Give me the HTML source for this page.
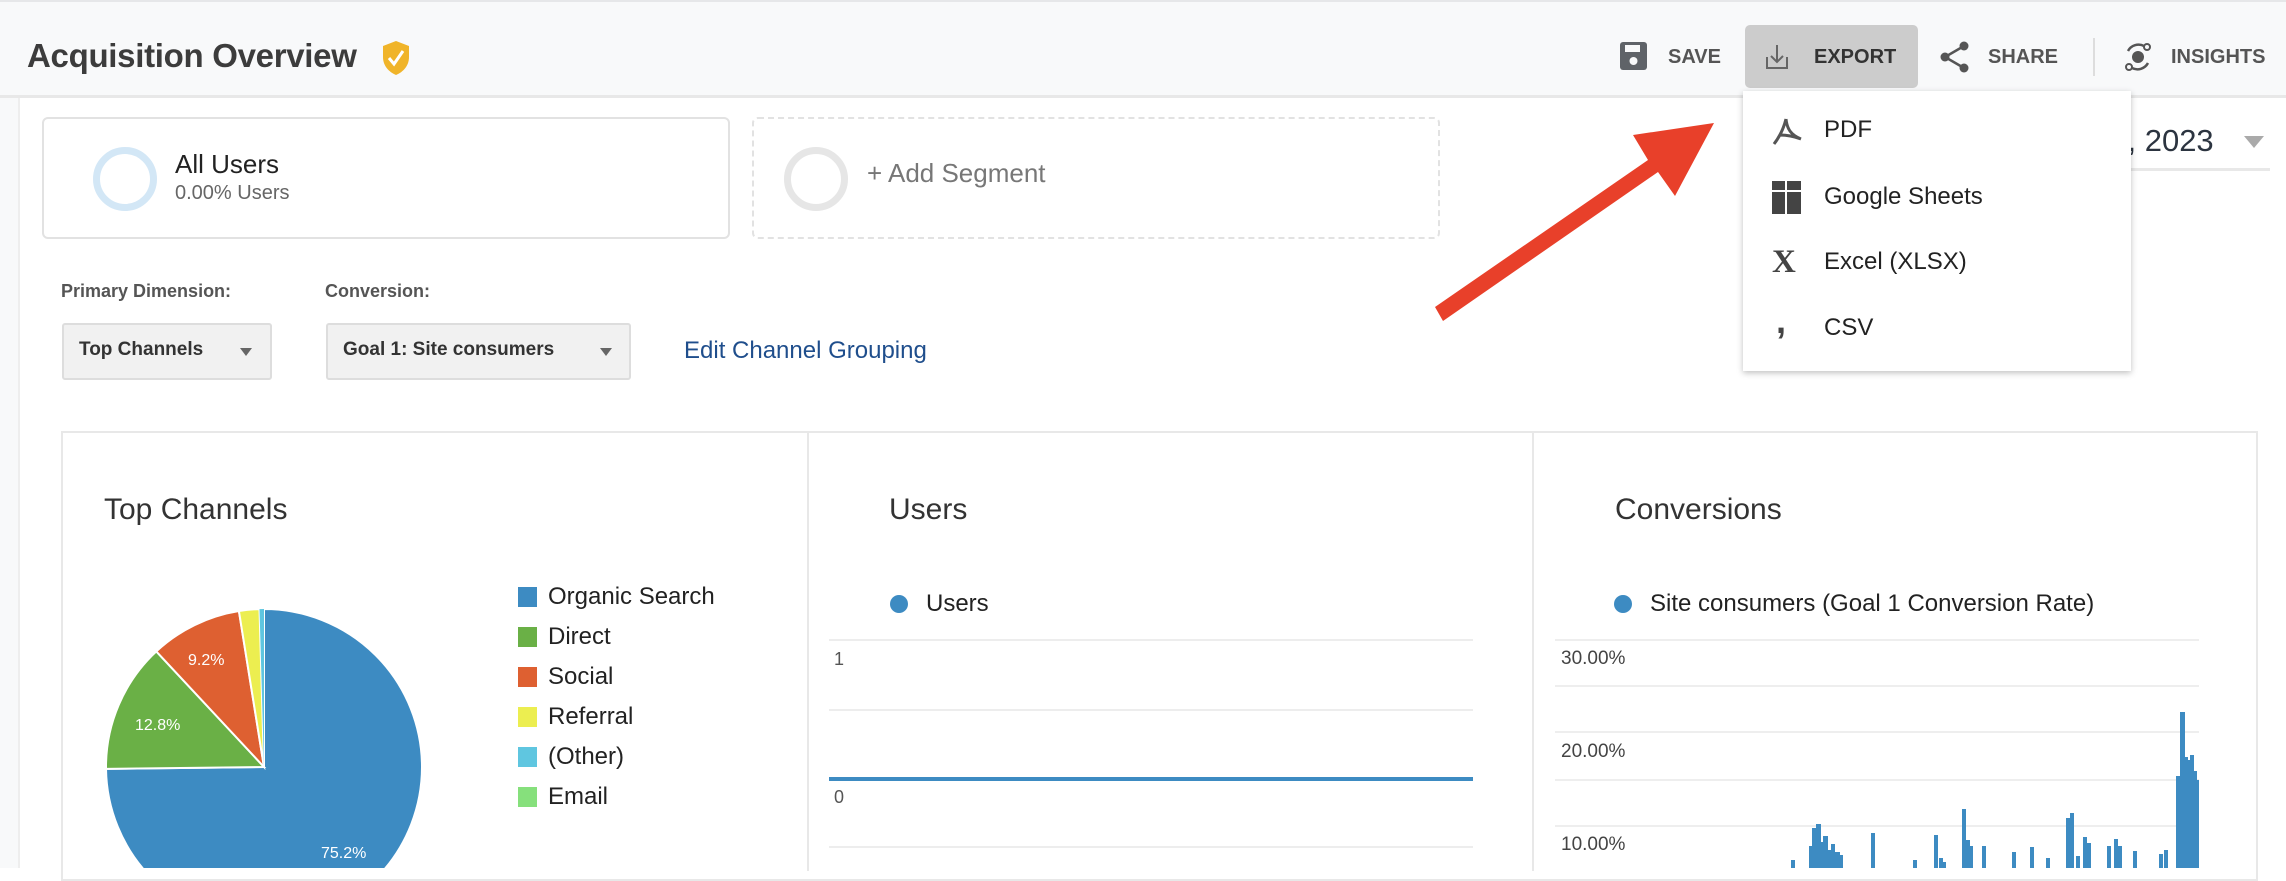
<!DOCTYPE html>
<html><head><meta charset="utf-8"><style>
*{margin:0;padding:0;box-sizing:border-box}
body{width:2286px;height:868px;overflow:hidden;background:#fff;font-family:"Liberation Sans",Arial,sans-serif;position:relative;color:#333}
.a{position:absolute;white-space:nowrap}
.lg{position:absolute;left:548px;font-size:24px;color:#222;white-space:nowrap}
</style></head><body>
<div class="a" style="left:0;top:0;width:2286px;height:98px;background:#f8f9fa;border-top:2px solid #e6e7e9;border-bottom:3px solid #e8e8e8"></div>
<div class="a" style="left:0;top:98px;width:20px;height:770px;background:#f8f9fa;border-right:2px solid #eee"></div>
<div class="a" style="left:27px;top:37px;font-size:33px;font-weight:bold;color:#3c3c3c;letter-spacing:-0.3px">Acquisition Overview</div>
<svg class="a" style="left:381px;top:40px" width="30" height="36" viewBox="0 0 30 36"><path d="M15 1 L28 6 V17 C28 26 22 32 15 35 C8 32 2 26 2 17 V6 Z" fill="#f0b429"/><path d="M8 18 L13 24 L22 11" stroke="#fff" stroke-width="3" fill="none"/></svg>

<!-- toolbar -->
<svg class="a" style="left:1620px;top:42px" width="27" height="28" viewBox="0 0 27 28"><rect x="0" y="0" width="27" height="28" rx="3" fill="#5f6368"/><rect x="5" y="3" width="15" height="7" fill="#f8f9fa"/><circle cx="13.5" cy="19" r="4" fill="#f8f9fa"/></svg>
<div class="a" style="left:1668px;top:46px;font-size:20px;font-weight:bold;color:#555">SAVE</div>
<div class="a" style="left:1745px;top:25px;width:173px;height:63px;background:#cccccc;border-radius:5px"></div>
<svg class="a" style="left:1766px;top:43px" width="22" height="27" viewBox="0 0 22 27"><path d="M1 14 V25 H21 V14" stroke="#666" stroke-width="2" fill="none"/><path d="M11 2 V19 M5 13 L11 19 L17 13" stroke="#666" stroke-width="2" fill="none"/></svg>
<div class="a" style="left:1814px;top:46px;font-size:20px;font-weight:bold;color:#333">EXPORT</div>
<svg class="a" style="left:1940px;top:41px" width="30" height="32" viewBox="0 0 30 32"><circle cx="24" cy="5" r="4.5" fill="#555"/><circle cx="5" cy="16" r="4.5" fill="#555"/><circle cx="24" cy="27" r="4.5" fill="#555"/><path d="M24 5 L5 16 L24 27" stroke="#555" stroke-width="2.5" fill="none"/></svg>
<div class="a" style="left:1988px;top:46px;font-size:20px;font-weight:bold;color:#555">SHARE</div>
<div class="a" style="left:2093px;top:38px;width:2px;height:38px;background:#ddd"></div>
<svg class="a" style="left:2122px;top:41px" width="32" height="32" viewBox="0 0 32 32"><circle cx="16" cy="16" r="6" fill="#555"/><path d="M6 10 A12 12 0 0 1 22 5 M26 22 A12 12 0 0 1 10 27" stroke="#555" stroke-width="2.5" fill="none"/><circle cx="25" cy="6" r="3" fill="none" stroke="#555" stroke-width="2"/><circle cx="7" cy="26" r="3" fill="none" stroke="#555" stroke-width="2"/></svg>
<div class="a" style="left:2171px;top:46px;font-size:20px;font-weight:bold;color:#555">INSIGHTS</div>

<!-- segments -->
<div class="a" style="left:42px;top:117px;width:688px;height:122px;border:2px solid #e2e2e2;border-radius:6px"></div>
<div class="a" style="left:93px;top:147px;width:64px;height:64px;border:7px solid #d3e7f6;border-radius:50%"></div>
<div class="a" style="left:175px;top:149px;font-size:26px;color:#222">All Users</div>
<div class="a" style="left:175px;top:182px;font-size:20px;color:#666">0.00% Users</div>
<div class="a" style="left:752px;top:117px;width:688px;height:122px;border:2px dashed #e2e2e2;border-radius:6px"></div>
<div class="a" style="left:784px;top:147px;width:64px;height:64px;border:7px solid #e6e6e6;border-radius:50%"></div>
<div class="a" style="left:867px;top:158px;font-size:26px;color:#777">+ Add Segment</div>

<!-- date -->
<div class="a" style="left:2093px;top:123px;font-size:31px;color:#2c3440">17, 2023</div>
<div class="a" style="left:2244px;top:136px;width:0;height:0;border-left:10px solid transparent;border-right:10px solid transparent;border-top:12px solid #aaa"></div>
<div class="a" style="left:2090px;top:168px;width:180px;height:3px;background:#e8e8e8"></div>

<!-- dims -->
<div class="a" style="left:61px;top:281px;font-size:18px;font-weight:bold;color:#555">Primary Dimension:</div>
<div class="a" style="left:325px;top:281px;font-size:18px;font-weight:bold;color:#555">Conversion:</div>
<div class="a" style="left:62px;top:323px;width:210px;height:57px;background:#f1f1f1;border:2px solid #ddd;border-radius:3px"></div>
<div class="a" style="left:79px;top:339px;font-size:19px;font-weight:bold;color:#333">Top Channels</div>
<div class="a" style="left:240px;top:348px;border-left:6px solid transparent;border-right:6px solid transparent;border-top:8px solid #666"></div>
<div class="a" style="left:326px;top:323px;width:305px;height:57px;background:#f1f1f1;border:2px solid #ddd;border-radius:3px"></div>
<div class="a" style="left:343px;top:339px;font-size:19px;font-weight:bold;color:#333">Goal 1: Site consumers</div>
<div class="a" style="left:600px;top:348px;border-left:6px solid transparent;border-right:6px solid transparent;border-top:8px solid #666"></div>
<div class="a" style="left:684px;top:337px;font-size:24px;color:#1f4e8c">Edit Channel Grouping</div>

<!-- panels -->
<div class="a" style="left:61px;top:431px;width:2197px;height:450px;border:2px solid #e8e8e8"></div>
<div class="a" style="left:807px;top:431px;width:2px;height:440px;background:#e8e8e8"></div>
<div class="a" style="left:1532px;top:431px;width:2px;height:440px;background:#e8e8e8"></div>

<div class="a" style="left:104px;top:493px;font-size:30px;color:#333">Top Channels</div>
<svg class="a" style="left:0;top:0" width="2286" height="868">
<g transform="translate(264,767)">
<path d="M0 0 L0 -158 A158 158 0 1 1 -157.99 1.9 Z" fill="#3d8bc2" stroke="#fff" stroke-width="2"/>
<path d="M0 0 L-157.99 1.9 A158 158 0 0 1 -107.7 -115.6 Z" fill="#6ab046" stroke="#fff" stroke-width="2"/>
<path d="M0 0 L-107.7 -115.6 A158 158 0 0 1 -25.1 -156 Z" fill="#de6031" stroke="#fff" stroke-width="2"/>
<path d="M0 0 L-25.1 -156 A158 158 0 0 1 -4.5 -157.9 Z" fill="#ecee50" stroke="#fff" stroke-width="2"/>
<path d="M0 0 L-4.5 -157.9 A158 158 0 0 1 0 -158 Z" fill="#5fc6e0"/>
</g>
<text x="188" y="665" font-size="16" fill="#fff" font-family="Liberation Sans">9.2%</text>
<text x="135" y="730" font-size="16" fill="#fff" font-family="Liberation Sans">12.8%</text>
<text x="321" y="858" font-size="16" fill="#fff" font-family="Liberation Sans">75.2%</text>
<!-- users chart -->
<g fill="#ededed"><rect x="829" y="639" width="644" height="2"/><rect x="829" y="709" width="644" height="2"/><rect x="829" y="846" width="644" height="2"/></g>
<rect x="829" y="777" width="644" height="4" fill="#3d8bc2"/>
<text x="834" y="665" font-size="18" fill="#555" font-family="Liberation Sans">1</text>
<text x="834" y="803" font-size="18" fill="#555" font-family="Liberation Sans">0</text>
<circle cx="899" cy="604" r="9" fill="#3d8bc2"/>
<circle cx="1623" cy="604" r="9" fill="#3d8bc2"/>
<!-- conv chart -->
<g fill="#eeeeee"><rect x="1555" y="639" width="644" height="2"/><rect x="1555" y="685" width="644" height="2"/><rect x="1555" y="731" width="644" height="2"/><rect x="1555" y="779" width="644" height="2"/><rect x="1555" y="825" width="644" height="2"/></g>
<text x="1561" y="664" font-size="19" fill="#444" font-family="Liberation Sans">30.00%</text>
<text x="1561" y="757" font-size="19" fill="#444" font-family="Liberation Sans">20.00%</text>
<text x="1561" y="850" font-size="19" fill="#444" font-family="Liberation Sans">10.00%</text>
<g fill="#3d8bc2">
<rect x="1791" y="860" width="4" height="10"/>
<rect x="1809" y="846" width="4" height="30"/><rect x="1812" y="828" width="4" height="50"/><rect x="1816" y="824" width="5" height="50"/><rect x="1820" y="842" width="4" height="30"/><rect x="1823" y="836" width="5" height="40"/><rect x="1827" y="850" width="4" height="30"/><rect x="1831" y="844" width="4" height="30"/><rect x="1835" y="852" width="5" height="20"/><rect x="1840" y="855" width="3" height="20"/>
<rect x="1871" y="833" width="4" height="40"/>
<rect x="1913" y="860" width="4" height="10"/><rect x="1934" y="835" width="4" height="40"/><rect x="1939" y="858" width="4" height="10"/><rect x="1942" y="862" width="4" height="10"/><rect x="1962" y="809" width="4" height="60"/><rect x="1965" y="840" width="5" height="30"/><rect x="1969" y="846" width="4" height="30"/><rect x="1982" y="846" width="4" height="30"/>
<rect x="2012" y="852" width="4" height="20"/><rect x="2030" y="847" width="4" height="30"/><rect x="2046" y="858" width="4" height="10"/>
<rect x="2066" y="818" width="4" height="60"/><rect x="2070" y="813" width="4" height="60"/><rect x="2076" y="856" width="4" height="20"/><rect x="2083" y="837" width="4" height="40"/><rect x="2087" y="843" width="4" height="30"/>
<rect x="2107" y="846" width="4" height="30"/><rect x="2114" y="839" width="4" height="40"/><rect x="2118" y="846" width="4" height="30"/><rect x="2133" y="851" width="4" height="20"/>
<rect x="2159" y="854" width="4" height="20"/><rect x="2164" y="850" width="4" height="20"/>
<rect x="2176" y="776" width="5" height="100"/><rect x="2180" y="712" width="5" height="160"/><rect x="2184" y="757" width="4" height="120"/><rect x="2187" y="760" width="4" height="120"/><rect x="2190" y="755" width="4" height="120"/><rect x="2193" y="771" width="4" height="120"/><rect x="2196" y="780" width="3" height="120"/>
</g>
<!-- arrow -->
<path d="M1435 307 L1648 160 L1633 135 L1714 123 L1675 196 L1658 172 L1443 321 Z" fill="#e8402a"/>
</svg>
<div class="a" style="left:518px;top:587px;width:19px;height:20px;background:#3d8bc2"></div>
<div class="a" style="left:518px;top:627px;width:19px;height:20px;background:#6ab046"></div>
<div class="a" style="left:518px;top:667px;width:19px;height:20px;background:#de6031"></div>
<div class="a" style="left:518px;top:707px;width:19px;height:20px;background:#ecee50"></div>
<div class="a" style="left:518px;top:747px;width:19px;height:20px;background:#5fc6e0"></div>
<div class="a" style="left:518px;top:787px;width:19px;height:20px;background:#86e07c"></div>
<div class="lg" style="top:583px">Organic Search</div>
<div class="lg" style="top:623px">Direct</div>
<div class="lg" style="top:663px">Social</div>
<div class="lg" style="top:703px">Referral</div>
<div class="lg" style="top:743px">(Other)</div>
<div class="lg" style="top:783px">Email</div>

<div class="a" style="left:889px;top:493px;font-size:30px;color:#333">Users</div>
<div class="a" style="left:926px;top:590px;font-size:24px;color:#222">Users</div>
<div class="a" style="left:1615px;top:493px;font-size:30px;color:#333">Conversions</div>
<div class="a" style="left:1650px;top:590px;font-size:24px;color:#222">Site consumers (Goal 1 Conversion Rate)</div>

<!-- menu -->
<div class="a" style="left:1743px;top:91px;width:388px;height:280px;background:#fff;box-shadow:0 2px 6px rgba(0,0,0,0.25)"></div>
<svg class="a" style="left:1771px;top:117px" width="32" height="30" viewBox="0 0 32 30"><path d="M15 2 C13 10 10 18 3 27 M15 2 C16 12 20 18 30 22 M9 18 C15 18 22 19 30 22" stroke="#555" stroke-width="3" fill="none"/></svg>
<div class="a" style="left:1824px;top:116px;font-size:24px;color:#222">PDF</div>
<svg class="a" style="left:1772px;top:181px" width="30" height="33" viewBox="0 0 30 33"><rect x="0" y="0" width="13" height="9" fill="#444"/><rect x="15" y="0" width="14" height="9" fill="#444"/><rect x="0" y="11" width="13" height="22" fill="#444"/><rect x="15" y="11" width="14" height="22" fill="#444"/></svg>
<div class="a" style="left:1824px;top:183px;font-size:24px;color:#222">Google Sheets</div>
<div class="a" style="left:1772px;top:244px;font-size:33px;font-weight:bold;color:#444;font-family:'Liberation Serif',serif">X</div>
<div class="a" style="left:1824px;top:248px;font-size:24px;color:#222">Excel (XLSX)</div>
<div class="a" style="left:1776px;top:300px;font-size:36px;font-weight:bold;color:#444">,</div>
<div class="a" style="left:1824px;top:314px;font-size:24px;color:#222">CSV</div>
</body></html>
